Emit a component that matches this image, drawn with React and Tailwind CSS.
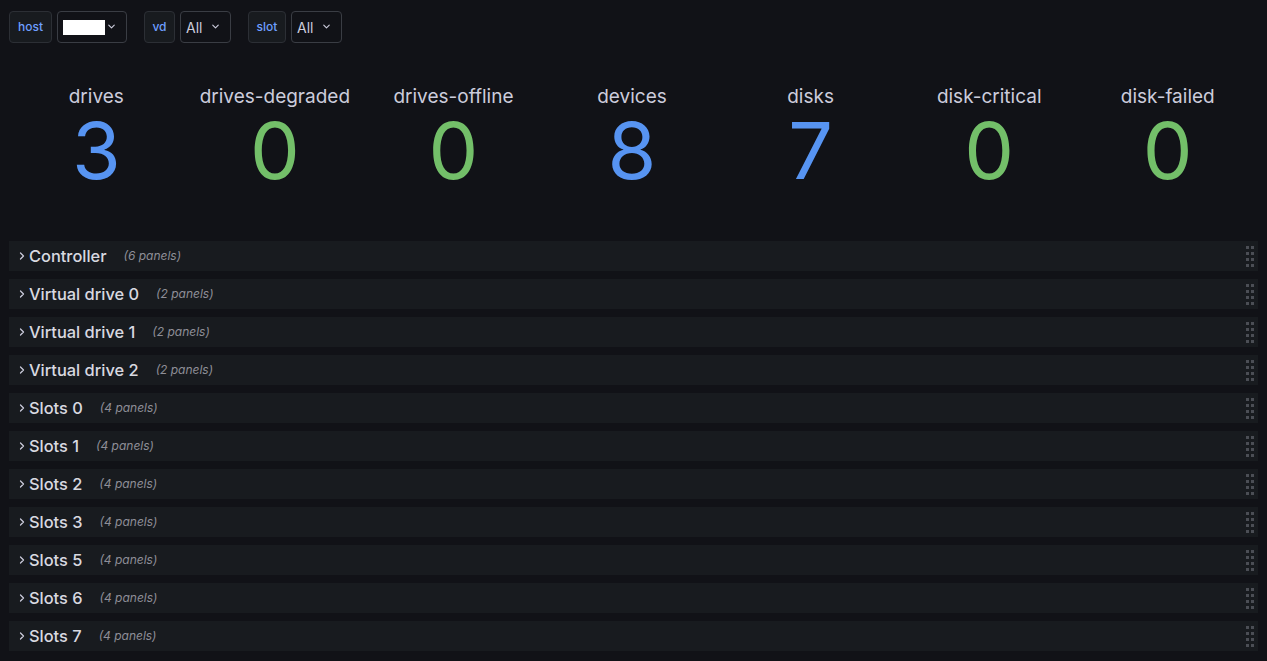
import { ChevronDown, ChevronRight } from 'lucide-react';

const stats = [
    { title: 'drives', value: '3', color: 'text-[#5794f2]' },
    { title: 'drives-degraded', value: '0', color: 'text-[#73bf69]' },
    { title: 'drives-offline', value: '0', color: 'text-[#73bf69]' },
    { title: 'devices', value: '8', color: 'text-[#5794f2]' },
    { title: 'disks', value: '7', color: 'text-[#5794f2]' },
    { title: 'disk-critical', value: '0', color: 'text-[#73bf69]' },
    { title: 'disk-failed', value: '0', color: 'text-[#73bf69]' },
];

const rows = [
    ['Controller', 6],
    ['Virtual drive 0', 2],
    ['Virtual drive 1', 2],
    ['Virtual drive 2', 2],
    ['Slots 0', 4],
    ['Slots 1', 4],
    ['Slots 2', 4],
    ['Slots 3', 4],
    ['Slots 5', 4],
    ['Slots 6', 4],
    ['Slots 7', 4],
];

const Variable = ({ label, labelWidth, children, width }) => (
    <div className="flex items-center">
        <div className={`h-8 flex items-center justify-center bg-[#181b1f] border border-[#2c2f35] rounded-sm text-[12px] text-[#6e9fff] font-medium ${labelWidth}`}>
            {label}
        </div>
        <div className={`h-8 ml-[5px] px-[5px] flex items-center justify-between border border-[#3a3d44] rounded-sm text-[14px] text-[#ccccdc] ${width}`}>
            {children}
            <ChevronDown size={11} strokeWidth={2.5} className="text-[#ccccdc] -mt-[2px] mr-[4px]" />
        </div>
    </div>
);

const DragHandle = () => (
    <div className="grid grid-cols-2 gap-x-[2px] gap-y-[3px]">
        {Array.from({ length: 8 }).map((_, i) => (
            <span key={i} className="w-[3px] h-[3px] bg-[#4b4e55]" />
        ))}
    </div>
);

export default function App() {
    return (
        <div className="w-[1267px] h-[661px] bg-[#111217] overflow-hidden" style={{ fontFamily: 'Inter, "Noto Sans", sans-serif' }}>
            {/* Variables */}
            <div className="flex items-center gap-[17px] pl-[9px] pt-[11px]">
                <Variable label="host" labelWidth="w-[43px]" width="w-[70px]">
                    <span className="w-[42px] h-[15px] bg-white" />
                </Variable>
                <Variable label="vd" labelWidth="w-[31px]" width="w-[51px]">All</Variable>
                <Variable label="slot" labelWidth="w-[38px]" width="w-[51px]">All</Variable>
            </div>

            {/* Stat panels */}
            <div className="flex pl-[7px] pr-[10px] mt-[42px] h-[132px]">
                {stats.map((s) => (
                    <div key={s.title} className="flex-1 flex flex-col items-center">
                        <div className="text-[19px] text-[#ccccdc] leading-[24px]">{s.title}</div>
                        <div className={`text-[79px] leading-[80px] ${s.color} mt-[1px]`}>{s.value}</div>
                    </div>
                ))}
            </div>

            {/* Collapsed rows */}
            <div className="flex flex-col gap-[8px] px-[9px] mt-[24px]">
                {rows.map(([name, count]) => (
                    <div key={name} className="h-[30px] bg-[#181b1f] flex items-center pl-[7px] pr-[4px]">
                        <ChevronRight size={12} strokeWidth={2.5} className="text-[#ccccdc]" />
                        <span className="ml-[1px] text-[16.4px] font-medium text-[#d8d9e0]">{name}</span>
                        <span className="ml-[17px] text-[12px] italic text-[#8e8e97]">({count} panels)</span>
                        <div className="ml-auto">
                            <DragHandle />
                        </div>
                    </div>
                ))}
            </div>
        </div>
    );
}
